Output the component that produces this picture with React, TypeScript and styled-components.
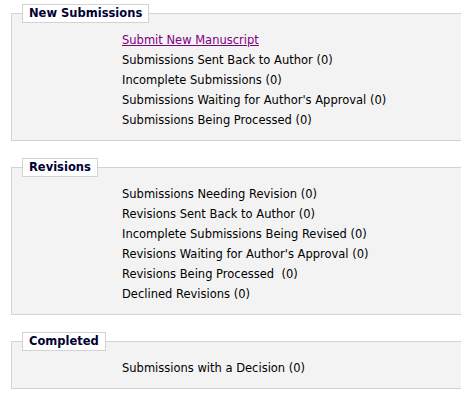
import React from 'react';
import styled, { createGlobalStyle } from 'styled-components';

const GlobalStyle = createGlobalStyle`
  html, body {
    margin: 0;
    padding: 0;
    background: #ffffff;
    overflow: hidden;
  }
  body {
    font-family: 'DejaVu Sans', Verdana, sans-serif;
    font-size: 11.5px;
    color: #000000;
  }
`;

const Page = styled.div`
  padding: 4px 0 0 11px;
  display: flex;
  flex-direction: column;
  gap: 17px;
`;

const Section = styled.fieldset`
  margin: 0;
  width: 480px;
  box-sizing: border-box;
  border: 1px solid #d3d3d3;
  background: #f3f3f3;
  padding: 7px 10px 10px 10px;
  min-width: 0;
`;

const Legend = styled.legend`
  background: #ffffff;
  border: 1px solid #d3d3d3;
  padding: 2px 6px 2px 6px;
  font-weight: bold;
  font-size: 11.5px;
  line-height: 13px;
  color: #000033;
`;

const List = styled.ul`
  list-style: none;
  margin: 0;
  padding: 0 0 0 100px;
`;

const Item = styled.li`
  line-height: 20px;
  height: 20px;
  white-space: pre;
`;

const Link = styled.a`
  color: #800080;
  text-decoration: underline;
`;

interface Group {
  title: string;
  items: string[];
  link?: string;
}

const groups: Group[] = [
  {
    title: 'New Submissions',
    link: 'Submit New Manuscript',
    items: [
      'Submissions Sent Back to Author (0)',
      'Incomplete Submissions (0)',
      "Submissions Waiting for Author's Approval (0)",
      'Submissions Being Processed (0)',
    ],
  },
  {
    title: 'Revisions',
    items: [
      'Submissions Needing Revision (0)',
      'Revisions Sent Back to Author (0)',
      'Incomplete Submissions Being Revised (0)',
      "Revisions Waiting for Author's Approval (0)",
      'Revisions Being Processed  (0)',
      'Declined Revisions (0)',
    ],
  },
  {
    title: 'Completed',
    items: ['Submissions with a Decision (0)'],
  },
];

const App: React.FC = () => {
  return (
    <>
      <GlobalStyle />
      <Page>
        {groups.map(group => (
          <Section key={group.title}>
            <Legend>{group.title}</Legend>
            <List>
              {group.link && (
                <Item>
                  <Link href="#">{group.link}</Link>
                </Item>
              )}
              {group.items.map(item => (
                <Item key={item}>{item}</Item>
              ))}
            </List>
          </Section>
        ))}
      </Page>
    </>
  );
};

export default App;
